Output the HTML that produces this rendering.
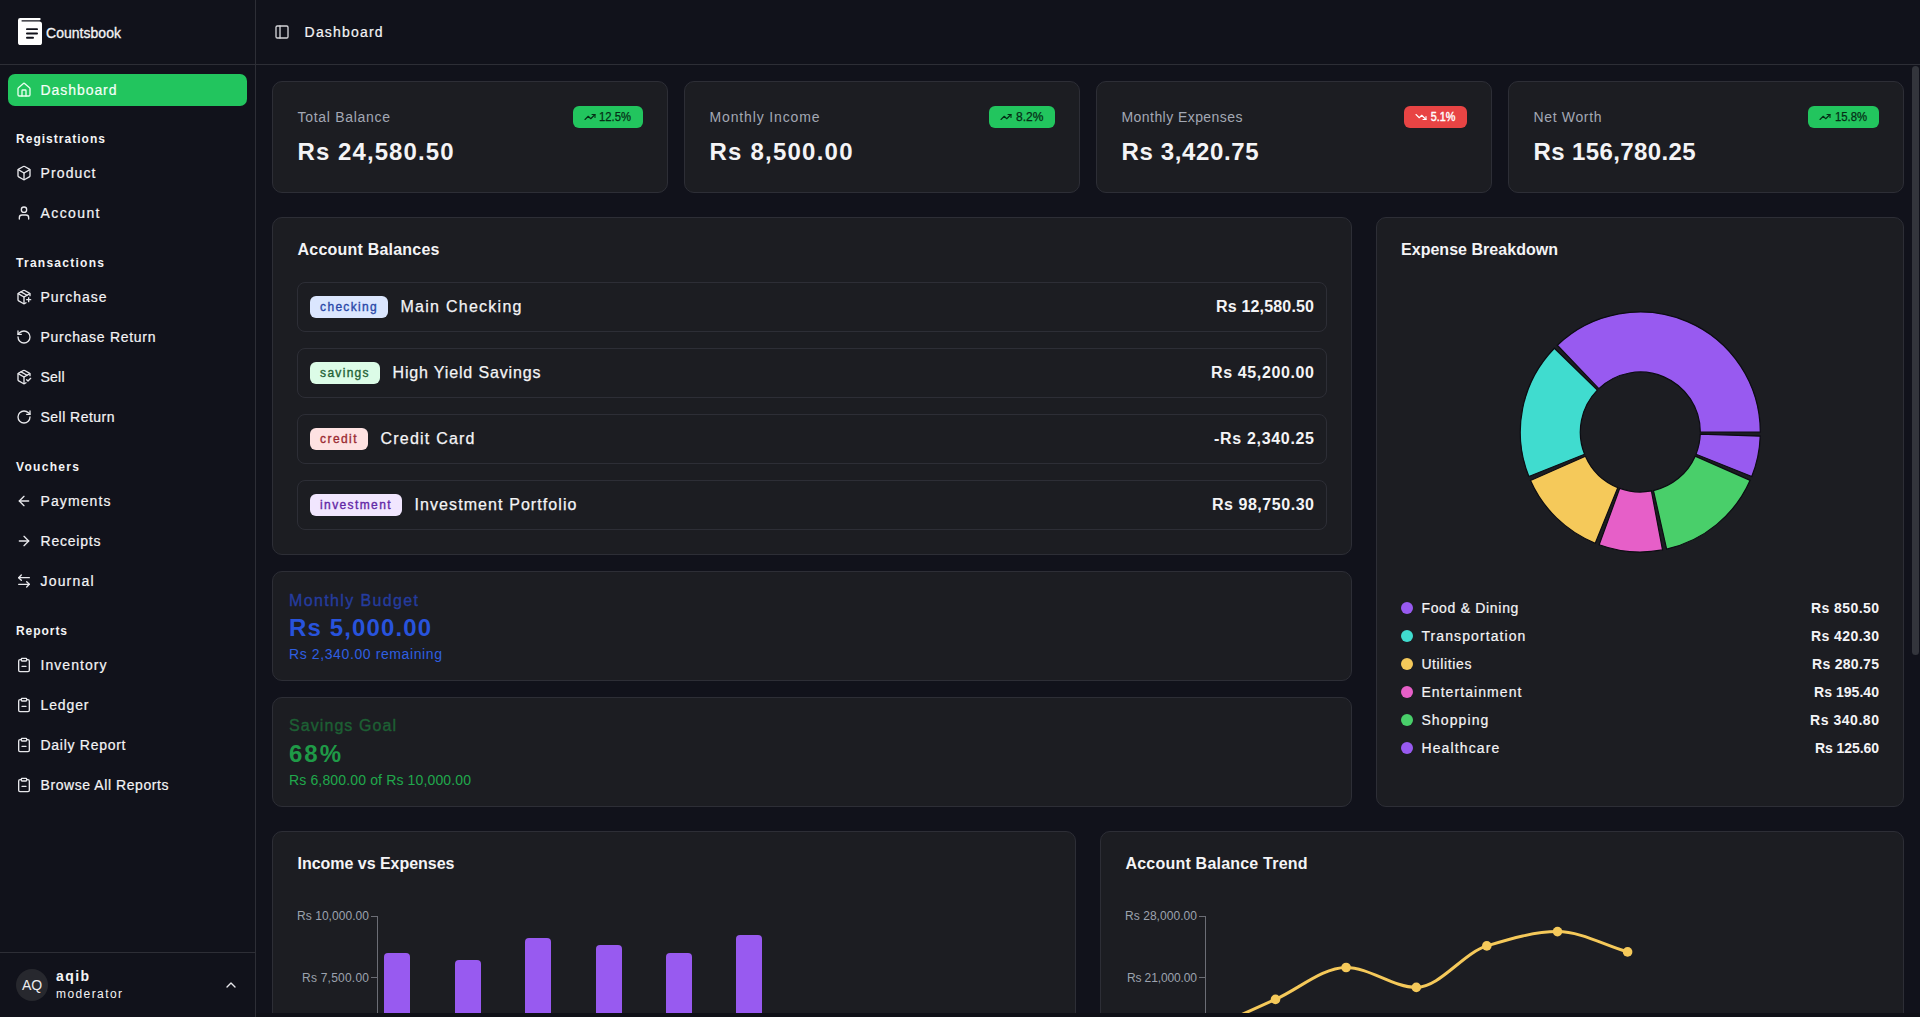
<!DOCTYPE html>
<html><head><meta charset="utf-8"><title>Countsbook Dashboard</title>
<style>
html,body{margin:0;padding:0}
body{width:1920px;height:1017px;overflow:hidden;position:relative;background:#11121b;font-family:"Liberation Sans",sans-serif;}
.a{position:absolute;box-sizing:content-box}
.t{position:absolute;white-space:nowrap}
.card{background:#1c1d22;border:1px solid #2d2e36;border-radius:10px}
#main{position:absolute;left:256px;top:65px;width:1664px;height:948px;overflow:hidden}
</style></head><body>
<div class="a" style="left:255px;top:0px;width:1px;height:1017px;background:#2d2e36"></div>
<div class="a" style="left:0px;top:64px;width:1920px;height:1px;background:#2d2e36"></div>
<div class="a" style="left:0px;top:952px;width:255px;height:1px;background:#2d2e36"></div>
<svg class="a" style="left:18px;top:18px" width="24" height="28" viewBox="0 0 24 28"><path d="M2.2,0 H21.6 A1.1,1.1 0 0 1 21.6,2.2 H3.6 V3.6 H21.4 A2.6,2.6 0 0 1 24,6.2 V24.4 A2.6,2.6 0 0 1 21.4,27 H2.6 A2.6,2.6 0 0 1 0,24.4 V2.2 A2.2,2.2 0 0 1 2.2,0 Z" fill="#fff"/><rect x="8" y="10.2" width="12" height="1.9" rx="0.95" fill="#11121b"/><rect x="8" y="14.6" width="12" height="1.9" rx="0.95" fill="#11121b"/><rect x="8" y="18.8" width="8" height="1.9" rx="0.95" fill="#11121b"/></svg>
<div id="t1" class="t" style="left:46px;top:23.65px;font-size:14px;line-height:18px;color:#f4f4f6;font-weight:400;letter-spacing:0.031px;-webkit-text-stroke:0.3px #f4f4f6;">Countsbook</div>
<div class="a" style="left:8px;top:74px;width:239px;height:32px;background:#22c55e;border-radius:7px"></div>
<svg class="a" style="left:16px;top:82px" width="16" height="16" viewBox="0 0 24 24" fill="none" stroke="#eafff0" stroke-width="2" stroke-linecap="round" stroke-linejoin="round"><path d="M15 21v-8a1 1 0 0 0-1-1h-4a1 1 0 0 0-1 1v8"/><path d="M3 10a2 2 0 0 1 .709-1.528l7-5.999a2 2 0 0 1 2.582 0l7 5.999A2 2 0 0 1 21 10v9a2 2 0 0 1-2 2H5a2 2 0 0 1-2-2z"/></svg>
<div id="t2" class="t" style="left:40.5px;top:81.05px;font-size:14px;line-height:18px;color:#f5fff8;font-weight:400;letter-spacing:0.938px;-webkit-text-stroke:0.2px #f5fff8;">Dashboard</div>
<div id="t3" class="t" style="left:16px;top:132.14px;font-size:12px;line-height:15px;color:#f4f4f6;font-weight:700;letter-spacing:1.026px;">Registrations</div>
<svg class="a" style="left:16px;top:165.2px" width="16" height="16" viewBox="0 0 24 24" fill="none" stroke="#e8e8ec" stroke-width="2" stroke-linecap="round" stroke-linejoin="round"><path d="M21 8a2 2 0 0 0-1-1.73l-7-4a2 2 0 0 0-2 0l-7 4A2 2 0 0 0 3 8v8a2 2 0 0 0 1 1.73l7 4a2 2 0 0 0 2 0l7-4A2 2 0 0 0 21 16Z"/><path d="m3.3 7 8.7 5 8.7-5"/><path d="M12 22V12"/></svg>
<div id="t4" class="t" style="left:40.5px;top:164.25px;font-size:14px;line-height:18px;color:#f4f4f6;font-weight:400;letter-spacing:1.125px;-webkit-text-stroke:0.2px #f4f4f6;">Product</div>
<svg class="a" style="left:16px;top:205.2px" width="16" height="16" viewBox="0 0 24 24" fill="none" stroke="#e8e8ec" stroke-width="2" stroke-linecap="round" stroke-linejoin="round"><path d="M19 21v-2a4 4 0 0 0-4-4H9a4 4 0 0 0-4 4v2"/><circle cx="12" cy="7" r="4"/></svg>
<div id="t5" class="t" style="left:40.5px;top:204.25px;font-size:14px;line-height:18px;color:#f4f4f6;font-weight:400;letter-spacing:1.401px;-webkit-text-stroke:0.2px #f4f4f6;">Account</div>
<div id="t6" class="t" style="left:16px;top:255.94px;font-size:12px;line-height:15px;color:#f4f4f6;font-weight:700;letter-spacing:1.270px;">Transactions</div>
<svg class="a" style="left:16px;top:289.00000000000006px" width="16" height="16" viewBox="0 0 24 24" fill="none" stroke="#e8e8ec" stroke-width="2" stroke-linecap="round" stroke-linejoin="round"><path d="M16 16h6"/><path d="M19 13v6"/><path d="M21 10V8a2 2 0 0 0-1-1.73l-7-4a2 2 0 0 0-2 0l-7 4A2 2 0 0 0 3 8v8a2 2 0 0 0 1 1.73l7 4a2 2 0 0 0 2 0l2-1.14"/><path d="m7.5 4.27 9 5.15"/><polyline points="3.29 7 12 12 20.71 7"/><line x1="12" x2="12" y1="22" y2="12"/></svg>
<div id="t7" class="t" style="left:40.5px;top:288.05px;font-size:14px;line-height:18px;color:#f4f4f6;font-weight:400;letter-spacing:0.978px;-webkit-text-stroke:0.2px #f4f4f6;">Purchase</div>
<svg class="a" style="left:16px;top:329.00000000000006px" width="16" height="16" viewBox="0 0 24 24" fill="none" stroke="#e8e8ec" stroke-width="2" stroke-linecap="round" stroke-linejoin="round"><path d="M3 12a9 9 0 1 0 9-9 9.75 9.75 0 0 0-6.74 2.74L3 8"/><path d="M3 3v5h5"/></svg>
<div id="t8" class="t" style="left:40.5px;top:328.05px;font-size:14px;line-height:18px;color:#f4f4f6;font-weight:400;letter-spacing:0.710px;-webkit-text-stroke:0.2px #f4f4f6;">Purchase Return</div>
<svg class="a" style="left:16px;top:369.00000000000006px" width="16" height="16" viewBox="0 0 24 24" fill="none" stroke="#e8e8ec" stroke-width="2" stroke-linecap="round" stroke-linejoin="round"><path d="m16 16 2 2 4-4"/><path d="M21 10V8a2 2 0 0 0-1-1.73l-7-4a2 2 0 0 0-2 0l-7 4A2 2 0 0 0 3 8v8a2 2 0 0 0 1 1.73l7 4a2 2 0 0 0 2 0l2-1.14"/><path d="m7.5 4.27 9 5.15"/><polyline points="3.29 7 12 12 20.71 7"/><line x1="12" x2="12" y1="22" y2="12"/></svg>
<div id="t9" class="t" style="left:40.5px;top:368.05px;font-size:14px;line-height:18px;color:#f4f4f6;font-weight:400;letter-spacing:0.214px;-webkit-text-stroke:0.2px #f4f4f6;">Sell</div>
<svg class="a" style="left:16px;top:409.00000000000006px" width="16" height="16" viewBox="0 0 24 24" fill="none" stroke="#e8e8ec" stroke-width="2" stroke-linecap="round" stroke-linejoin="round"><path d="M21 12a9 9 0 1 1-9-9c2.52 0 4.93 1 6.74 2.74L21 8"/><path d="M21 3v5h-5"/></svg>
<div id="t10" class="t" style="left:40.5px;top:408.05px;font-size:14px;line-height:18px;color:#f4f4f6;font-weight:400;letter-spacing:0.473px;-webkit-text-stroke:0.2px #f4f4f6;">Sell Return</div>
<div id="t11" class="t" style="left:16px;top:460.04px;font-size:12px;line-height:15px;color:#f4f4f6;font-weight:700;letter-spacing:1.315px;">Vouchers</div>
<svg class="a" style="left:16px;top:493.1px" width="16" height="16" viewBox="0 0 24 24" fill="none" stroke="#e8e8ec" stroke-width="2" stroke-linecap="round" stroke-linejoin="round"><path d="m12 19-7-7 7-7"/><path d="M19 12H5"/></svg>
<div id="t12" class="t" style="left:40.5px;top:492.15px;font-size:14px;line-height:18px;color:#f4f4f6;font-weight:400;letter-spacing:1.107px;-webkit-text-stroke:0.2px #f4f4f6;">Payments</div>
<svg class="a" style="left:16px;top:533.1px" width="16" height="16" viewBox="0 0 24 24" fill="none" stroke="#e8e8ec" stroke-width="2" stroke-linecap="round" stroke-linejoin="round"><path d="M5 12h14"/><path d="m12 5 7 7-7 7"/></svg>
<div id="t13" class="t" style="left:40.5px;top:532.15px;font-size:14px;line-height:18px;color:#f4f4f6;font-weight:400;letter-spacing:0.790px;-webkit-text-stroke:0.2px #f4f4f6;">Receipts</div>
<svg class="a" style="left:16px;top:573.1px" width="16" height="16" viewBox="0 0 24 24" fill="none" stroke="#e8e8ec" stroke-width="2" stroke-linecap="round" stroke-linejoin="round"><path d="M8 3 4 7l4 4"/><path d="M4 7h16"/><path d="m16 21 4-4-4-4"/><path d="M20 17H4"/></svg>
<div id="t14" class="t" style="left:40.5px;top:572.15px;font-size:14px;line-height:18px;color:#f4f4f6;font-weight:400;letter-spacing:1.180px;-webkit-text-stroke:0.2px #f4f4f6;">Journal</div>
<div id="t15" class="t" style="left:16px;top:623.94px;font-size:12px;line-height:15px;color:#f4f4f6;font-weight:700;letter-spacing:0.943px;">Reports</div>
<svg class="a" style="left:16px;top:657.0px" width="16" height="16" viewBox="0 0 24 24" fill="none" stroke="#e8e8ec" stroke-width="2" stroke-linecap="round" stroke-linejoin="round"><rect width="8" height="4" x="8" y="2" rx="1" ry="1"/><path d="M16 4h2a2 2 0 0 1 2 2v14a2 2 0 0 1-2 2H6a2 2 0 0 1-2-2V6a2 2 0 0 1 2-2h2"/><path d="M9 14h6"/></svg>
<div id="t16" class="t" style="left:40.5px;top:656.05px;font-size:14px;line-height:18px;color:#f4f4f6;font-weight:400;letter-spacing:1.051px;-webkit-text-stroke:0.2px #f4f4f6;">Inventory</div>
<svg class="a" style="left:16px;top:697.0px" width="16" height="16" viewBox="0 0 24 24" fill="none" stroke="#e8e8ec" stroke-width="2" stroke-linecap="round" stroke-linejoin="round"><rect width="8" height="4" x="8" y="2" rx="1" ry="1"/><path d="M16 4h2a2 2 0 0 1 2 2v14a2 2 0 0 1-2 2H6a2 2 0 0 1-2-2V6a2 2 0 0 1 2-2h2"/><path d="M9 14h6"/></svg>
<div id="t17" class="t" style="left:40.5px;top:696.05px;font-size:14px;line-height:18px;color:#f4f4f6;font-weight:400;letter-spacing:0.881px;-webkit-text-stroke:0.2px #f4f4f6;">Ledger</div>
<svg class="a" style="left:16px;top:737.0px" width="16" height="16" viewBox="0 0 24 24" fill="none" stroke="#e8e8ec" stroke-width="2" stroke-linecap="round" stroke-linejoin="round"><rect width="8" height="4" x="8" y="2" rx="1" ry="1"/><path d="M16 4h2a2 2 0 0 1 2 2v14a2 2 0 0 1-2 2H6a2 2 0 0 1-2-2V6a2 2 0 0 1 2-2h2"/><path d="M9 14h6"/></svg>
<div id="t18" class="t" style="left:40.5px;top:736.05px;font-size:14px;line-height:18px;color:#f4f4f6;font-weight:400;letter-spacing:0.724px;-webkit-text-stroke:0.2px #f4f4f6;">Daily Report</div>
<svg class="a" style="left:16px;top:777.0px" width="16" height="16" viewBox="0 0 24 24" fill="none" stroke="#e8e8ec" stroke-width="2" stroke-linecap="round" stroke-linejoin="round"><rect width="8" height="4" x="8" y="2" rx="1" ry="1"/><path d="M16 4h2a2 2 0 0 1 2 2v14a2 2 0 0 1-2 2H6a2 2 0 0 1-2-2V6a2 2 0 0 1 2-2h2"/><path d="M9 14h6"/></svg>
<div id="t19" class="t" style="left:40.5px;top:776.05px;font-size:14px;line-height:18px;color:#f4f4f6;font-weight:400;letter-spacing:0.572px;-webkit-text-stroke:0.2px #f4f4f6;">Browse All Reports</div>
<div class="a" style="left:16px;top:969px;width:32px;height:32px;background:#27282e;border-radius:50%"></div>
<div id="t20" class="t" style="left:32px;top:976.15px;font-size:14px;line-height:18px;color:#ececf0;font-weight:400;letter-spacing:0.000px;transform:translateX(-50%)">AQ</div>
<div id="t21" class="t" style="left:56px;top:967.15px;font-size:14px;line-height:18px;color:#f4f4f6;font-weight:700;letter-spacing:1.406px;">aqib</div>
<div id="t22" class="t" style="left:56px;top:987.14px;font-size:12px;line-height:15px;color:#f4f4f6;font-weight:400;letter-spacing:1.412px;">moderator</div>
<svg class="a" style="left:223px;top:977px" width="16" height="16" viewBox="0 0 24 24" fill="none" stroke="#e8e8ec" stroke-width="2" stroke-linecap="round" stroke-linejoin="round"><path d="m18 15-6-6-6 6"/></svg>
<svg class="a" style="left:274px;top:24px" width="16" height="16" viewBox="0 0 24 24" fill="none" stroke="#d4d4d8" stroke-width="2" stroke-linecap="round" stroke-linejoin="round"><rect width="18" height="18" x="3" y="3" rx="2"/><path d="M9 3v18"/></svg>
<div id="t23" class="t" style="left:304.6px;top:23.15px;font-size:14px;line-height:18px;color:#f4f4f6;font-weight:400;letter-spacing:1.188px;-webkit-text-stroke:0.2px #f4f4f6;">Dashboard</div>
<div class="a card" style="left:272px;top:81px;width:394px;height:110px"></div>
<div id="t24" class="t" style="left:297.5px;top:108.05px;font-size:14px;line-height:18px;color:#a3a8b4;font-weight:400;letter-spacing:0.703px;">Total Balance</div>
<div id="t25" class="t" style="left:297.5px;top:137.48px;font-size:24px;line-height:30px;color:#f4f4f6;font-weight:700;letter-spacing:1.080px;">Rs 24,580.50</div>
<div class="a" style="left:573px;top:106px;width:70px;height:22px;background:#22c55e;border-radius:6px"></div>
<svg class="a" style="left:583.5px;top:111px" width="12" height="12" viewBox="0 0 24 24" fill="none" stroke="#052e16" stroke-width="2.2" stroke-linecap="round" stroke-linejoin="round"><polyline points="22 7 13.5 15.5 8.5 10.5 2 17"/><polyline points="16 7 22 7 22 13"/></svg>
<div id="t26" class="t" style="right:1288.5px;top:109.74px;font-size:12px;line-height:15px;color:#052e16;font-weight:400;letter-spacing:0.000px;transform:scaleX(0.9385);transform-origin:right center;-webkit-text-stroke:0.25px #052e16;">12.5%</div>
<div class="a card" style="left:684px;top:81px;width:394px;height:110px"></div>
<div id="t27" class="t" style="left:709.5px;top:108.05px;font-size:14px;line-height:18px;color:#a3a8b4;font-weight:400;letter-spacing:0.859px;">Monthly Income</div>
<div id="t28" class="t" style="left:709.5px;top:137.48px;font-size:24px;line-height:30px;color:#f4f4f6;font-weight:700;letter-spacing:1.222px;">Rs 8,500.00</div>
<div class="a" style="left:989px;top:106px;width:66px;height:22px;background:#22c55e;border-radius:6px"></div>
<svg class="a" style="left:999.5px;top:111px" width="12" height="12" viewBox="0 0 24 24" fill="none" stroke="#052e16" stroke-width="2.2" stroke-linecap="round" stroke-linejoin="round"><polyline points="22 7 13.5 15.5 8.5 10.5 2 17"/><polyline points="16 7 22 7 22 13"/></svg>
<div id="t29" class="t" style="right:876.5px;top:109.74px;font-size:12px;line-height:15px;color:#052e16;font-weight:400;letter-spacing:0.080px;margin-right:-0.080px;-webkit-text-stroke:0.25px #052e16;">8.2%</div>
<div class="a card" style="left:1096px;top:81px;width:394px;height:110px"></div>
<div id="t30" class="t" style="left:1121.5px;top:108.05px;font-size:14px;line-height:18px;color:#a3a8b4;font-weight:400;letter-spacing:0.440px;">Monthly Expenses</div>
<div id="t31" class="t" style="left:1121.5px;top:137.48px;font-size:24px;line-height:30px;color:#f4f4f6;font-weight:700;letter-spacing:0.622px;">Rs 3,420.75</div>
<div class="a" style="left:1404px;top:106px;width:63px;height:22px;background:#e84444;border-radius:6px"></div>
<svg class="a" style="left:1414.5px;top:111px" width="12" height="12" viewBox="0 0 24 24" fill="none" stroke="#fff" stroke-width="2.2" stroke-linecap="round" stroke-linejoin="round"><polyline points="22 17 13.5 8.5 8.5 13.5 2 7"/><polyline points="16 17 22 17 22 11"/></svg>
<div id="t32" class="t" style="right:464.5px;top:109.74px;font-size:12px;line-height:15px;color:#fff;font-weight:400;letter-spacing:0.000px;transform:scaleX(0.8991);transform-origin:right center;-webkit-text-stroke:0.4px #fff;">5.1%</div>
<div class="a card" style="left:1508px;top:81px;width:394px;height:110px"></div>
<div id="t33" class="t" style="left:1533.5px;top:108.05px;font-size:14px;line-height:18px;color:#a3a8b4;font-weight:400;letter-spacing:0.654px;">Net Worth</div>
<div id="t34" class="t" style="left:1533.5px;top:137.48px;font-size:24px;line-height:30px;color:#f4f4f6;font-weight:700;letter-spacing:0.378px;">Rs 156,780.25</div>
<div class="a" style="left:1808px;top:106px;width:71px;height:22px;background:#22c55e;border-radius:6px"></div>
<svg class="a" style="left:1818.5px;top:111px" width="12" height="12" viewBox="0 0 24 24" fill="none" stroke="#052e16" stroke-width="2.2" stroke-linecap="round" stroke-linejoin="round"><polyline points="22 7 13.5 15.5 8.5 10.5 2 17"/><polyline points="16 7 22 7 22 13"/></svg>
<div id="t35" class="t" style="right:52.5px;top:109.74px;font-size:12px;line-height:15px;color:#052e16;font-weight:400;letter-spacing:0.000px;transform:scaleX(0.9446);transform-origin:right center;-webkit-text-stroke:0.25px #052e16;">15.8%</div>
<div class="a card" style="left:272px;top:217px;width:1078px;height:336px"></div>
<div id="t36" class="t" style="left:297.5px;top:240.26px;font-size:16px;line-height:20px;color:#f4f4f6;font-weight:700;letter-spacing:0.219px;">Account Balances</div>
<div class="a" style="left:297px;top:282px;width:1028px;height:48px;border:1px solid #2d2e36;border-radius:8px"></div>
<div class="a" style="left:310px;top:296px;width:78px;height:22px;background:#dbe6fe;border-radius:6px"></div>
<div id="t37" class="t" style="left:349.0px;top:300.04px;font-size:12px;line-height:15px;color:#2a48a8;font-weight:400;letter-spacing:1.304px;-webkit-text-stroke:0.35px #2a48a8;transform:translateX(-50%)">checking</div>
<div id="t38" class="t" style="left:400.5px;top:297.16px;font-size:16px;line-height:20px;color:#f4f4f6;font-weight:400;letter-spacing:1.264px;-webkit-text-stroke:0.25px #f4f4f6;">Main Checking</div>
<div id="t39" class="t" style="right:606px;top:296.96px;font-size:16px;line-height:20px;color:#f4f4f6;font-weight:700;letter-spacing:0.175px;margin-right:-0.175px;">Rs 12,580.50</div>
<div class="a" style="left:297px;top:348px;width:1028px;height:48px;border:1px solid #2d2e36;border-radius:8px"></div>
<div class="a" style="left:310px;top:362px;width:70px;height:22px;background:#dcfce7;border-radius:6px"></div>
<div id="t40" class="t" style="left:345.0px;top:366.04px;font-size:12px;line-height:15px;color:#1f6236;font-weight:400;letter-spacing:1.302px;-webkit-text-stroke:0.35px #1f6236;transform:translateX(-50%)">savings</div>
<div id="t41" class="t" style="left:392.5px;top:363.16px;font-size:16px;line-height:20px;color:#f4f4f6;font-weight:400;letter-spacing:0.858px;-webkit-text-stroke:0.25px #f4f4f6;">High Yield Savings</div>
<div id="t42" class="t" style="right:606px;top:362.96px;font-size:16px;line-height:20px;color:#f4f4f6;font-weight:700;letter-spacing:0.629px;margin-right:-0.629px;">Rs 45,200.00</div>
<div class="a" style="left:297px;top:414px;width:1028px;height:48px;border:1px solid #2d2e36;border-radius:8px"></div>
<div class="a" style="left:310px;top:428px;width:58px;height:22px;background:#fee2e2;border-radius:6px"></div>
<div id="t43" class="t" style="left:339.0px;top:432.04px;font-size:12px;line-height:15px;color:#9b2c33;font-weight:400;letter-spacing:1.431px;-webkit-text-stroke:0.35px #9b2c33;transform:translateX(-50%)">credit</div>
<div id="t44" class="t" style="left:380.5px;top:429.16px;font-size:16px;line-height:20px;color:#f4f4f6;font-weight:400;letter-spacing:1.219px;-webkit-text-stroke:0.25px #f4f4f6;">Credit Card</div>
<div id="t45" class="t" style="right:606px;top:428.96px;font-size:16px;line-height:20px;color:#f4f4f6;font-weight:700;letter-spacing:0.680px;margin-right:-0.680px;">-Rs 2,340.25</div>
<div class="a" style="left:297px;top:480px;width:1028px;height:48px;border:1px solid #2d2e36;border-radius:8px"></div>
<div class="a" style="left:310px;top:494px;width:92px;height:22px;background:#f1e6fe;border-radius:6px"></div>
<div id="t46" class="t" style="left:356.0px;top:498.04px;font-size:12px;line-height:15px;color:#6328a6;font-weight:400;letter-spacing:1.385px;-webkit-text-stroke:0.35px #6328a6;transform:translateX(-50%)">investment</div>
<div id="t47" class="t" style="left:414.5px;top:495.16px;font-size:16px;line-height:20px;color:#f4f4f6;font-weight:400;letter-spacing:1.084px;-webkit-text-stroke:0.25px #f4f4f6;">Investment Portfolio</div>
<div id="t48" class="t" style="right:606px;top:494.96px;font-size:16px;line-height:20px;color:#f4f4f6;font-weight:700;letter-spacing:0.538px;margin-right:-0.538px;">Rs 98,750.30</div>
<div class="a card" style="left:272px;top:571px;width:1078px;height:108px"></div>
<div id="t49" class="t" style="left:289px;top:590.56px;font-size:16px;line-height:20px;color:#253c9e;font-weight:400;letter-spacing:1.370px;-webkit-text-stroke:0.35px #253c9e;">Monthly Budget</div>
<div id="t50" class="t" style="left:289px;top:613.48px;font-size:24px;line-height:30px;color:#2853dc;font-weight:700;letter-spacing:1.122px;">Rs 5,000.00</div>
<div id="t51" class="t" style="left:289px;top:644.75px;font-size:14px;line-height:18px;color:#2f5fe0;font-weight:400;letter-spacing:0.606px;">Rs 2,340.00 remaining</div>
<div class="a card" style="left:272px;top:697px;width:1078px;height:108px"></div>
<div id="t52" class="t" style="left:289px;top:716.26px;font-size:16px;line-height:20px;color:#1c6034;font-weight:400;letter-spacing:1.075px;-webkit-text-stroke:0.35px #1c6034;">Savings Goal</div>
<div id="t53" class="t" style="left:289px;top:739.38px;font-size:24px;line-height:30px;color:#1f9a47;font-weight:700;letter-spacing:1.977px;">68%</div>
<div id="t54" class="t" style="left:289px;top:770.85px;font-size:14px;line-height:18px;color:#20a84c;font-weight:400;letter-spacing:0.145px;">Rs 6,800.00 of Rs 10,000.00</div>
<div class="a card" style="left:1376px;top:217px;width:526px;height:588px"></div>
<div id="t55" class="t" style="left:1401px;top:240.26px;font-size:16px;line-height:20px;color:#f4f4f6;font-weight:700;letter-spacing:0.031px;">Expense Breakdown</div>
<svg class="a" style="left:1376px;top:217px" width="528" height="590"><path d="M384.30,215.00 A120,120 0 0 0 181.36,128.28 L222.83,171.64 A60,60 0 0 1 324.30,215.00 Z" fill="#985af0" stroke="#0c0c12" stroke-width="1.2"/><path d="M178.38,131.22 A120,120 0 0 0 152.89,259.57 L208.59,237.29 A60,60 0 0 1 221.34,173.11 Z" fill="#40dccf" stroke="#0c0c12" stroke-width="1.2"/><path d="M154.51,263.44 A120,120 0 0 0 219.24,326.22 L241.77,270.61 A60,60 0 0 1 209.40,239.22 Z" fill="#f5c95a" stroke="#0c0c12" stroke-width="1.2"/><path d="M223.15,327.72 A120,120 0 0 0 286.52,332.93 L275.41,273.96 A60,60 0 0 1 243.73,271.36 Z" fill="#e65fc8" stroke="#0c0c12" stroke-width="1.2"/><path d="M290.62,332.08 A120,120 0 0 0 374.14,263.33 L319.22,239.16 A60,60 0 0 1 277.46,273.54 Z" fill="#49cf6a" stroke="#0c0c12" stroke-width="1.2"/><path d="M375.76,259.46 A120,120 0 0 0 384.23,219.19 L324.26,217.09 A60,60 0 0 1 320.03,237.23 Z" fill="#985af0" stroke="#0c0c12" stroke-width="1.2"/></svg>
<div class="a" style="left:1401px;top:602px;width:12px;height:12px;background:#985af0;border-radius:50%"></div>
<div id="t56" class="t" style="left:1421.4px;top:598.95px;font-size:14px;line-height:18px;color:#f4f4f6;font-weight:400;letter-spacing:0.690px;-webkit-text-stroke:0.2px #f4f4f6;">Food &amp; Dining</div>
<div id="t57" class="t" style="right:41px;top:599.15px;font-size:14px;line-height:18px;color:#f4f4f6;font-weight:700;letter-spacing:0.424px;margin-right:-0.424px;">Rs 850.50</div>
<div class="a" style="left:1401px;top:630px;width:12px;height:12px;background:#40dccf;border-radius:50%"></div>
<div id="t58" class="t" style="left:1421.4px;top:626.95px;font-size:14px;line-height:18px;color:#f4f4f6;font-weight:400;letter-spacing:1.096px;-webkit-text-stroke:0.2px #f4f4f6;">Transportation</div>
<div id="t59" class="t" style="right:41px;top:627.15px;font-size:14px;line-height:18px;color:#f4f4f6;font-weight:700;letter-spacing:0.424px;margin-right:-0.424px;">Rs 420.30</div>
<div class="a" style="left:1401px;top:658px;width:12px;height:12px;background:#f5c95a;border-radius:50%"></div>
<div id="t60" class="t" style="left:1421.4px;top:654.95px;font-size:14px;line-height:18px;color:#f4f4f6;font-weight:400;letter-spacing:0.609px;-webkit-text-stroke:0.2px #f4f4f6;">Utilities</div>
<div id="t61" class="t" style="right:41px;top:655.15px;font-size:14px;line-height:18px;color:#f4f4f6;font-weight:700;letter-spacing:0.299px;margin-right:-0.299px;">Rs 280.75</div>
<div class="a" style="left:1401px;top:686px;width:12px;height:12px;background:#e65fc8;border-radius:50%"></div>
<div id="t62" class="t" style="left:1421.4px;top:682.95px;font-size:14px;line-height:18px;color:#f4f4f6;font-weight:400;letter-spacing:1.069px;-webkit-text-stroke:0.2px #f4f4f6;">Entertainment</div>
<div id="t63" class="t" style="right:41px;top:683.15px;font-size:14px;line-height:18px;color:#f4f4f6;font-weight:700;letter-spacing:0.049px;margin-right:-0.049px;">Rs 195.40</div>
<div class="a" style="left:1401px;top:714px;width:12px;height:12px;background:#49cf6a;border-radius:50%"></div>
<div id="t64" class="t" style="left:1421.4px;top:710.95px;font-size:14px;line-height:18px;color:#f4f4f6;font-weight:400;letter-spacing:1.118px;-webkit-text-stroke:0.2px #f4f4f6;">Shopping</div>
<div id="t65" class="t" style="right:41px;top:711.15px;font-size:14px;line-height:18px;color:#f4f4f6;font-weight:700;letter-spacing:0.549px;margin-right:-0.549px;">Rs 340.80</div>
<div class="a" style="left:1401px;top:742px;width:12px;height:12px;background:#985af0;border-radius:50%"></div>
<div id="t66" class="t" style="left:1421.4px;top:738.95px;font-size:14px;line-height:18px;color:#f4f4f6;font-weight:400;letter-spacing:1.144px;-webkit-text-stroke:0.2px #f4f4f6;">Healthcare</div>
<div id="t67" class="t" style="right:41px;top:739.15px;font-size:14px;line-height:18px;color:#f4f4f6;font-weight:700;letter-spacing:-0.076px;margin-right:0.076px;">Rs 125.60</div>
<div class="a card" style="left:272px;top:831px;width:802px;height:398px"></div>
<div id="t68" class="t" style="left:297.5px;top:854.26px;font-size:16px;line-height:20px;color:#f4f4f6;font-weight:700;letter-spacing:-0.025px;">Income vs Expenses</div>
<div class="a card" style="left:1100px;top:831px;width:802px;height:398px"></div>
<div id="t69" class="t" style="left:1125.5px;top:854.26px;font-size:16px;line-height:20px;color:#f4f4f6;font-weight:700;letter-spacing:0.209px;">Account Balance Trend</div>
<div class="a" style="left:377px;top:916px;width:1px;height:120px;background:#6b6d75"></div>
<div class="a" style="left:371px;top:916px;width:6px;height:1px;background:#6b6d75"></div>
<div class="a" style="left:371px;top:977px;width:6px;height:1px;background:#6b6d75"></div>
<div id="t70" class="t" style="right:1551px;top:909.14px;font-size:12px;line-height:15px;color:#9ca3af;font-weight:400;letter-spacing:0.055px;margin-right:-0.055px;">Rs 10,000.00</div>
<div id="t71" class="t" style="right:1551px;top:970.64px;font-size:12px;line-height:15px;color:#9ca3af;font-weight:400;letter-spacing:0.228px;margin-right:-0.228px;">Rs 7,500.00</div>
<div class="a" style="left:384px;top:952.5px;width:26px;height:147.5px;background:#985af0;border-radius:4px 4px 0 0"></div>
<div class="a" style="left:454.5px;top:959.7px;width:26px;height:140.29999999999995px;background:#985af0;border-radius:4px 4px 0 0"></div>
<div class="a" style="left:525px;top:937.7px;width:26px;height:162.29999999999995px;background:#985af0;border-radius:4px 4px 0 0"></div>
<div class="a" style="left:595.5px;top:945px;width:26px;height:155px;background:#985af0;border-radius:4px 4px 0 0"></div>
<div class="a" style="left:666px;top:952.5px;width:26px;height:147.5px;background:#985af0;border-radius:4px 4px 0 0"></div>
<div class="a" style="left:736.3px;top:935.4px;width:26px;height:164.60000000000002px;background:#985af0;border-radius:4px 4px 0 0"></div>
<div class="a" style="left:1205px;top:916px;width:1px;height:120px;background:#6b6d75"></div>
<div class="a" style="left:1199px;top:916px;width:6px;height:1px;background:#6b6d75"></div>
<div class="a" style="left:1199px;top:977px;width:6px;height:1px;background:#6b6d75"></div>
<div id="t72" class="t" style="right:723px;top:909.14px;font-size:12px;line-height:15px;color:#9ca3af;font-weight:400;letter-spacing:0.055px;margin-right:-0.055px;">Rs 28,000.00</div>
<div id="t73" class="t" style="right:723px;top:970.64px;font-size:12px;line-height:15px;color:#9ca3af;font-weight:400;letter-spacing:-0.126px;margin-right:0.126px;">Rs 21,000.00</div>
<svg class="a" style="left:0;top:0" width="1920" height="1013"><path d="M1205,1031 C1228.50,1020.47 1252.00,1009.98 1275.5,999.4 C1299.03,988.81 1322.57,967.50 1346.1,967.5 C1369.50,967.50 1392.90,987.40 1416.3,987.4 C1439.80,987.40 1463.30,952.98 1486.8,945.9 C1510.37,938.80 1533.93,931.60 1557.5,931.6 C1580.87,931.60 1604.23,945.13 1627.6,951.9" fill="none" stroke="#f5c95a" stroke-width="3"/><circle cx="1275.5" cy="999.4" r="4.8" fill="#f5c95a"/><circle cx="1346.1" cy="967.5" r="4.8" fill="#f5c95a"/><circle cx="1416.3" cy="987.4" r="4.8" fill="#f5c95a"/><circle cx="1486.8" cy="945.9" r="4.8" fill="#f5c95a"/><circle cx="1557.5" cy="931.6" r="4.8" fill="#f5c95a"/><circle cx="1627.6" cy="951.9" r="4.8" fill="#f5c95a"/></svg>
<div class="a" style="left:256px;top:1013px;width:1664px;height:4px;background:#0f1017"></div>
<div class="a" style="left:1912px;top:66px;width:7px;height:589px;background:#33353c;border-radius:4px"></div>
</body></html>
